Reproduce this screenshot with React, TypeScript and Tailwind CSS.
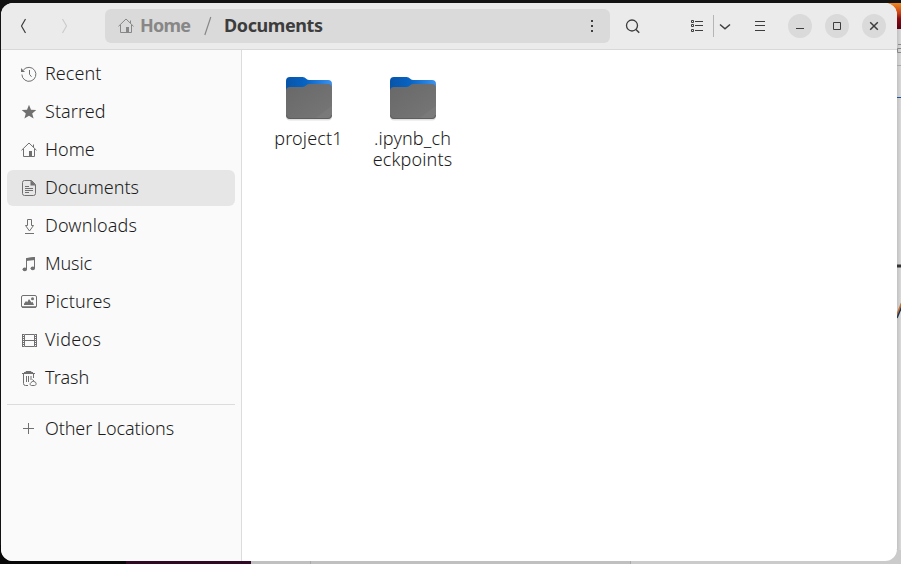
import type { ReactNode } from "react";

function Icon({ children, className = "" }: { children: ReactNode; className?: string }) {
  return (
    <svg width="16" height="16" viewBox="0 0 16 16" fill="none" stroke="currentColor" className={"shrink-0 " + className}>
      {children}
    </svg>
  );
}

const home = (
  <Icon>
    <path d="M.5 8.3 8 1l7.5 7.3M2.5 7v7.5h11V7M12.5 5V2.5" />
    <path d="M8 9h3v5.5H8z" fill="currentColor" stroke="none" />
  </Icon>
);
const recent = (
  <Icon>
    <path d="M2.4 4A7 7 0 1 1 .9 8.5M8.5 4v4.3l2 2.5" />
    <path d="M0 2v4h4z" fill="currentColor" stroke="none" />
  </Icon>
);
const starred = (
  <Icon>
    <path d="m8 .8 2 4.9 5.3.3-4.1 3.4 1.4 5.2L8 11.7l-4.6 2.9 1.4-5.2L.7 6 6 5.7z" fill="currentColor" stroke="none" />
  </Icon>
);
const documents = (
  <Icon>
    <path d="M3.5.5h7l4 4v9a2 2 0 0 1-2 2h-9a2 2 0 0 1-2-2v-11a2 2 0 0 1 2-2z" />
    <path d="M9.5 0v5.5H15z" fill="currentColor" stroke="none" />
    <path d="M4 6.5h4M4 8.5h8M4 10.5h8M4 12.5h4" />
  </Icon>
);
const downloads = (
  <Icon>
    <path d="M6.5 1.5h4v6h2L8.5 13l-4-5.5h2zM4 15.5h9" />
  </Icon>
);
const music = (
  <Icon>
    <path d="M5.5 13V2.5l8-1V12" />
    <path d="M5 2.2 14 1v3L5 5z" fill="currentColor" stroke="none" />
    <ellipse cx="3.8" cy="13.3" rx="2.2" ry="1.9" fill="currentColor" stroke="none" />
    <ellipse cx="11.8" cy="12.3" rx="2.2" ry="1.9" fill="currentColor" stroke="none" />
  </Icon>
);
const pictures = (
  <Icon>
    <rect x=".5" y="1.5" width="15" height="12" rx="1.5" />
    <path d="M1 12.3h14v1.4H1zM3 11V9.8L5 7l1.2 1.2L8 5l2.5 3.5 1-.7L13 11z" fill="currentColor" stroke="none" />
    <circle cx="11.5" cy="4.8" r="1.5" fill="currentColor" stroke="none" />
  </Icon>
);
const videos = (
  <Icon>
    <path d="M3.5 2.5h10v12h-10zM3.5 8.5h10" />
    <path d="M1.5 2v13M15.5 2v13" />
    <path d="M2.5 2v13M14.5 2v13" strokeDasharray="1 1" />
  </Icon>
);
const trash = (
  <Icon>
    <path d="M1 3.5h13M5 2.5v-1h5v1M2.5 4v9.5a2 2 0 0 0 2 2H7M12.5 4v4" />
    <path d="M3 2.5h9" />
    <path d="M5.5 6v6M7.5 6v6M10 6v4" />
    <path d="M11.5 9.5 13 11M10 12.5l2-1.5 2.5 1.2c1.3 1.6.4 3.3-1 3.3h-3c-1.5 0-2-1.8-.5-3z" />
  </Icon>
);
const plus = (
  <Icon>
    <path d="M7.5 2v11M2 7.5h11" />
  </Icon>
);

const places = [
  { name: "Recent", icon: recent, text: "tracking-[0.05px]" },
  { name: "Starred", icon: starred, text: "tracking-[0.05px]" },
  { name: "Home", icon: home, text: "tracking-[0px]" },
  { name: "Documents", icon: documents, text: "tracking-[0px]" },
  { name: "Downloads", icon: downloads, text: "tracking-[0.15px]" },
  { name: "Music", icon: music, text: "tracking-[-0.15px]" },
  { name: "Pictures", icon: pictures, text: "tracking-[0.1px]" },
  { name: "Videos", icon: videos, text: "tracking-[0.3px]" },
  { name: "Trash", icon: trash, text: "tracking-[0px]" },
];

function Row({ name, icon, text }: { name: string; icon: ReactNode; text: string }) {
  return (
    <div className={"flex h-9 items-center gap-2 rounded-md pl-3.5 text-[#707070] " + (name === "Documents" ? "bg-[#e6e6e6]" : "")}>
      {icon}
      <span className={"whitespace-nowrap pb-0.5 font-light text-[#1c1c1c] " + text}>{name}</span>
    </div>
  );
}

function Folder({ id, text, width }: { id: string; text: string; width: string }) {
  return (
    <div className={"flex flex-col items-center " + width}>
      <svg width="50" height="48" viewBox="0 0 50 48">
        <defs>
          <linearGradient id={id + "b"} x1="0" y1="0" x2="1" y2="0">
            <stop offset="0" stopColor="#0754a8" />
            <stop offset=".45" stopColor="#0864c4" />
            <stop offset="1" stopColor="#3c92ee" />
          </linearGradient>
          <linearGradient id={id + "g"} x1="0" y1="0" x2="1" y2="1">
            <stop offset="0" stopColor="#686868" />
            <stop offset=".8" stopColor="#747474" />
            <stop offset=".82" stopColor="#797979" />
            <stop offset="1" stopColor="#7b7b7b" />
          </linearGradient>
        </defs>
        <rect x="2" y="14" width="46" height="31.5" rx="4" fill="#000" opacity=".12" />
        <path d="M2 6a4 4 0 0 1 4-4h12.5c3.5 0 3.5 3 6.5 3h19a4 4 0 0 1 4 4v9H2z" fill={`url(#${id}b)`} />
        <path d="M2 16a4 4 0 0 1 4-4h12.5c3.5 0 3.5-3 6.5-3h19a4 4 0 0 1 4 4v27a4 4 0 0 1-4 4H6a4 4 0 0 1-4-4z" fill={`url(#${id}g)`} />
        <path d="M2.5 40a3.5 3.5 0 0 0 3.5 3.5h38a3.5 3.5 0 0 0 3.5-3.5" fill="none" stroke="#5e5e5e" />
      </svg>
      <div className="mt-[5px] mr-px whitespace-pre text-center font-light leading-[21px] tracking-[0.15px] text-[#1c1c1c]">{text}</div>
    </div>
  );
}

function Desktop() {
  return (
    <svg className="absolute inset-0" width="901" height="564">
      <defs>
        <linearGradient id="wall" x1="0" y1="0" x2="0" y2="1">
          <stop offset="0" stopColor="#ee8a20" />
          <stop offset=".4" stopColor="#c93d12" />
          <stop offset=".6" stopColor="#8a0b12" />
          <stop offset="1" stopColor="#580010" />
        </linearGradient>
        <linearGradient id="shade" x1="0" y1="0" x2="1" y2="0">
          <stop offset="0" stopColor="#c2c2c2" />
          <stop offset="1" stopColor="#dadada" />
        </linearGradient>
      </defs>
      <rect width="901" height="564" fill="#131313" />
      <rect x="885" y="3" width="16" height="26" fill="url(#wall)" />
      <rect x="897" y="29" width="4" height="535" fill="url(#shade)" />
      <path d="M897 65.5h4" stroke="#aaa" />
      <path d="M897 97.5h4" stroke="#17509c" />
      <path d="M901 44.5h-3M901 48.5h-3.5v4h3.5" stroke="#888" fill="none" />
      <path d="M897 266h4" stroke="#333" strokeWidth="3" />
      <path d="m896.5 316 5-13" stroke="#c76b28" strokeWidth="1.5" />
      <path d="m897 318 4.5-11" stroke="#1c3452" strokeWidth="1.5" />
      <rect y="545" width="126" height="19" fill="#080808" />
      <rect x="126" y="560" width="125" height="4" fill="#300a24" />
      <rect x="251" y="560" width="380" height="4" fill="#c0c0c0" />
      <rect x="631" y="550" width="270" height="14" fill="#cbcbcb" />
      <path d="M310.5 560v4M630.5 560v4" stroke="#aaa" />
    </svg>
  );
}

export default function App() {
  return (
    <div className="relative h-[564px] w-[901px] overflow-hidden pl-px pt-[3px] font-['Noto_Sans',sans-serif] text-[18px]">
      <Desktop />
      <div className="relative flex h-[558px] w-[896px] flex-col overflow-hidden rounded-xl bg-white">
        <header className="flex h-[47px] shrink-0 items-center border-b border-[#d8d8d8] bg-[#ebebeb] text-[#3d3d3d]">
          <svg className="ml-3.5 shrink-0" width="60" height="24" viewBox="0 0 60 24" fill="none" stroke="currentColor" strokeWidth="1.2">
            <path d="m10.5 5-4 7 4 7" />
            <path d="m47.5 5 4 7-4 7" stroke="#ccc" />
          </svg>
          <div className="ml-[30px] flex h-[34px] w-[505px] shrink-0 items-center rounded-md bg-[#dadada] pl-[13px] pr-[10px] font-bold">
            <div className="flex w-[86px] items-center gap-1.5 text-[#878787]">
              {home}
              <span className="pb-0.5 tracking-[-0.8px]">Home</span>
            </div>
            <svg className="w-5 shrink-0" width="20" height="20" viewBox="0 0 20 20">
              <path d="m.8 19 6-18" stroke="#888" strokeWidth="1.2" />
            </svg>
            <span className="flex-1 pb-0.5 tracking-[-0.4px]">Documents</span>
            <Icon>
              <path d="M7 2h2v2H7zM7 7h2v2H7zM7 12h2v2H7z" fill="currentColor" stroke="none" />
            </Icon>
          </div>
          <Icon className="ml-[15px]">
            <circle cx="7" cy="7.5" r="5.5" strokeWidth="1.3" />
            <path d="m11 11.5 3.2 3.2" strokeWidth="1.5" />
          </Icon>
          <svg className="ml-12 shrink-0" width="44" height="24" viewBox="0 0 44 24" fill="none" stroke="currentColor">
            <path d="M2.5 6.5h2v2h-2zM2.5 10.5h2v2h-2zM2.5 15.5h2v2h-2zM6 7.5h8M6 11.5h8M6 16.5h8" />
            <path d="M24.5 1v22" stroke="#b5b5b5" />
            <path d="m31 10.5 5 4.2 5-4.2" strokeWidth="1.5" />
          </svg>
          <Icon className="ml-[19px]">
            <path d="M3 3.5h10M3 7.5h10M3 12.5h10" />
          </Icon>
          <div className="ml-5 flex shrink-0 gap-[13px]">
            <div className="flex size-6 items-center justify-center rounded-full bg-[#dadada]">
              <Icon><path d="M4 10.5h8" /></Icon>
            </div>
            <div className="flex size-6 items-center justify-center rounded-full bg-[#dadada]">
              <Icon><path d="M4.5 4.5h7v7h-7z" /></Icon>
            </div>
            <div className="flex size-6 items-center justify-center rounded-full bg-[#dadada]">
              <Icon><path d="m4.2 4.2 7.6 7.6m0-7.6-7.6 7.6" strokeWidth="1.5" /></Icon>
            </div>
          </div>
        </header>
        <div className="flex min-h-0 flex-1">
          <nav className="w-[241px] shrink-0 border-r border-[#dcdcdc] bg-[#fafafa] px-1.5 pt-1.5">
            <div className="flex flex-col gap-0.5">
              {places.map((p) => (
                <Row key={p.name} {...p} />
              ))}
            </div>
            <div className="mt-2 mb-1.5 h-px bg-[#dcdcdc]" />
            <Row name="Other Locations" icon={plus} text="tracking-[-0.1px]" />
          </nav>
          <main className="flex flex-1 items-start pl-[15px] pt-[25px]">
            <Folder id="f1" text="project1" width="w-[104px]" />
            <Folder id="f2" text={".ipynb_ch\neckpoints"} width="w-[104px]" />
          </main>
        </div>
      </div>
    </div>
  );
}
